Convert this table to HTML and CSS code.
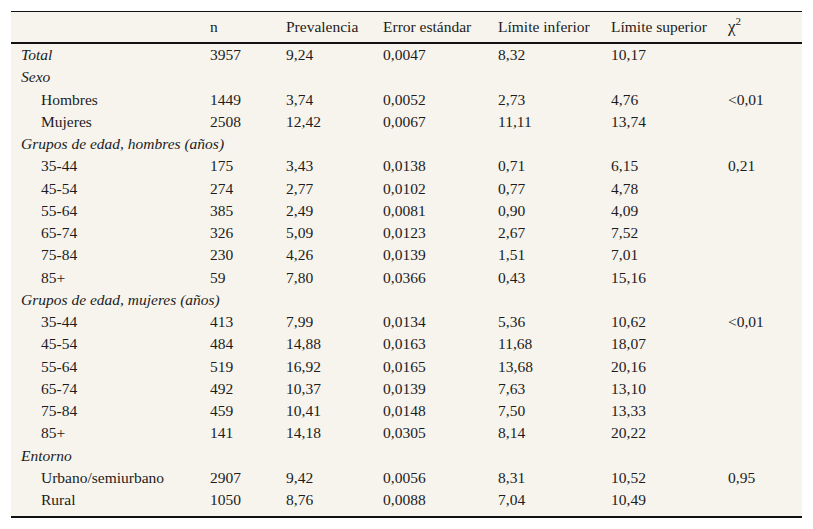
FILE: index.html
```html
<!DOCTYPE html>
<html lang="es">
<head>
<meta charset="utf-8">
<link rel="stylesheet" href="styles.css">
</head>
<body>
<table class="data">
  <colgroup>
    <col class="c1"><col class="c2"><col class="c3"><col class="c4"><col class="c5"><col class="c6"><col class="c7">
  </colgroup>
  <thead>
    <tr><th></th><th>n</th><th>Prevalencia</th><th>Error estándar</th><th>Límite inferior</th><th>Límite superior</th><th><span class="chi">χ</span><sup>2</sup></th></tr>
  </thead>
  <tbody>
    <tr><td class="grp">Total</td><td>3957</td><td>9,24</td><td>0,0047</td><td>8,32</td><td>10,17</td><td></td></tr>
    <tr><td class="grp">Sexo</td><td></td><td></td><td></td><td></td><td></td><td></td></tr>
    <tr><td class="ind">Hombres</td><td>1449</td><td>3,74</td><td>0,0052</td><td>2,73</td><td>4,76</td><td>&lt;0,01</td></tr>
    <tr><td class="ind">Mujeres</td><td>2508</td><td>12,42</td><td>0,0067</td><td>11,11</td><td>13,74</td><td></td></tr>
    <tr><td class="grp">Grupos de edad, hombres (años)</td><td></td><td></td><td></td><td></td><td></td><td></td></tr>
    <tr><td class="ind">35-44</td><td>175</td><td>3,43</td><td>0,0138</td><td>0,71</td><td>6,15</td><td>0,21</td></tr>
    <tr><td class="ind">45-54</td><td>274</td><td>2,77</td><td>0,0102</td><td>0,77</td><td>4,78</td><td></td></tr>
    <tr><td class="ind">55-64</td><td>385</td><td>2,49</td><td>0,0081</td><td>0,90</td><td>4,09</td><td></td></tr>
    <tr><td class="ind">65-74</td><td>326</td><td>5,09</td><td>0,0123</td><td>2,67</td><td>7,52</td><td></td></tr>
    <tr><td class="ind">75-84</td><td>230</td><td>4,26</td><td>0,0139</td><td>1,51</td><td>7,01</td><td></td></tr>
    <tr><td class="ind">85+</td><td>59</td><td>7,80</td><td>0,0366</td><td>0,43</td><td>15,16</td><td></td></tr>
    <tr><td class="grp">Grupos de edad, mujeres (años)</td><td></td><td></td><td></td><td></td><td></td><td></td></tr>
    <tr><td class="ind">35-44</td><td>413</td><td>7,99</td><td>0,0134</td><td>5,36</td><td>10,62</td><td>&lt;0,01</td></tr>
    <tr><td class="ind">45-54</td><td>484</td><td>14,88</td><td>0,0163</td><td>11,68</td><td>18,07</td><td></td></tr>
    <tr><td class="ind">55-64</td><td>519</td><td>16,92</td><td>0,0165</td><td>13,68</td><td>20,16</td><td></td></tr>
    <tr><td class="ind">65-74</td><td>492</td><td>10,37</td><td>0,0139</td><td>7,63</td><td>13,10</td><td></td></tr>
    <tr><td class="ind">75-84</td><td>459</td><td>10,41</td><td>0,0148</td><td>7,50</td><td>13,33</td><td></td></tr>
    <tr><td class="ind">85+</td><td>141</td><td>14,18</td><td>0,0305</td><td>8,14</td><td>20,22</td><td></td></tr>
    <tr><td class="grp">Entorno</td><td></td><td></td><td></td><td></td><td></td><td></td></tr>
    <tr><td class="ind">Urbano/semiurbano</td><td>2907</td><td>9,42</td><td>0,0056</td><td>8,31</td><td>10,52</td><td>0,95</td></tr>
    <tr class="last"><td class="ind">Rural</td><td>1050</td><td>8,76</td><td>0,0088</td><td>7,04</td><td>10,49</td><td></td></tr>
  </tbody>
</table>
</body>
</html>
```
FILE: styles.css
```css
html, body {
  margin: 0;
  padding: 0;
  background: #ffffff;
}
body {
  padding: 11px 0 0 11px;
}
.data {
  width: 791px;
  table-layout: fixed;
  border-collapse: collapse;
  background: #f7f4ee;
  font-family: "Liberation Serif", "Times New Roman", serif;
  font-size: 15.5px;
  color: #1c1c1c;
  border-top: 1px solid #111;
  border-bottom: 2px solid #111;
}
.c1 { width: 189px; }
.c2 { width: 76px; }
.c3 { width: 97px; }
.c4 { width: 115px; }
.c5 { width: 113px; }
.c6 { width: 117px; }
.c7 { width: 84px; }
.data th {
  font-weight: normal;
  text-align: left;
  padding: 5px 0 6px 10px;
  line-height: 19px;
  height: 19px;
  border-bottom: 2px solid #111;
  white-space: nowrap;
}
.data th .chi {
  font-size: 17px;
}
.data th sup {
  font-size: 11px;
  line-height: 0;
  vertical-align: 7px;
}
.data td {
  padding: 2px 0 2px 10px;
  line-height: 18.25px;
  height: 18.25px;
  white-space: nowrap;
}
.data td.grp {
  font-style: italic;
}
.data td.ind {
  padding-left: 30px;
}
.data tr.last td {
  padding-bottom: 7px;
}
```
